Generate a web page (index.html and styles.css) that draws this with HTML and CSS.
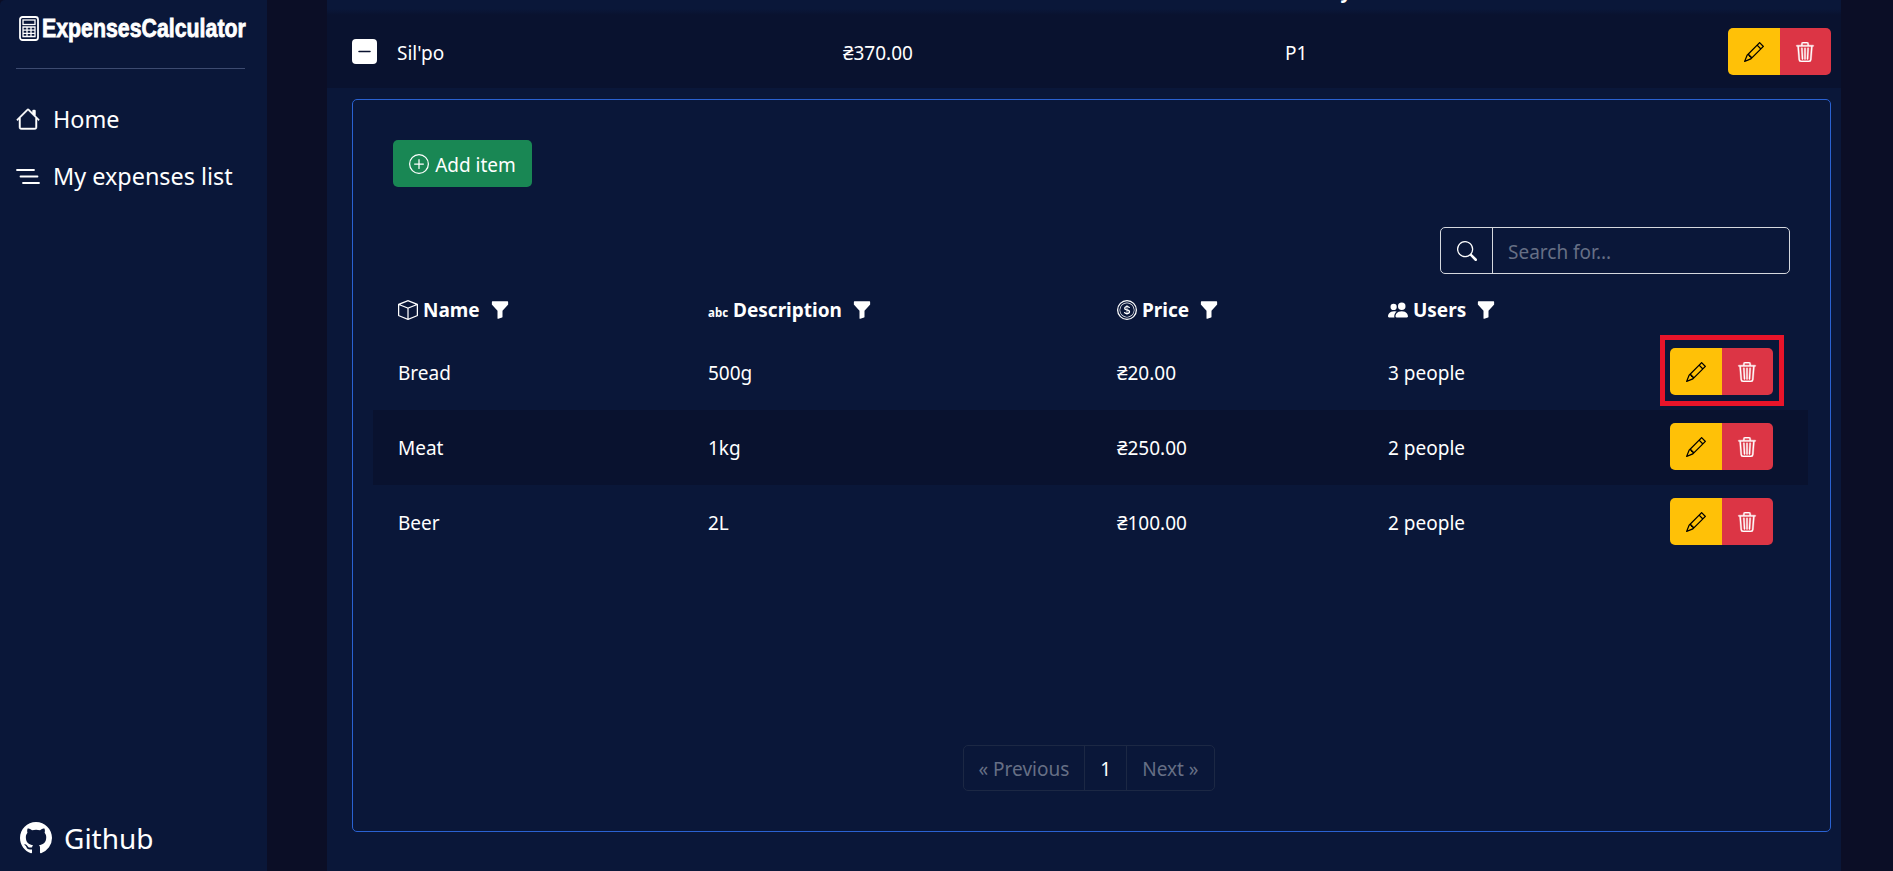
FILE: index.html
```html
<!DOCTYPE html>
<html lang="en">
<head>
    <meta charset="UTF-8">
    <meta name="viewport" content="width=device-width, initial-scale=1.0">
    <title>ExpensesCalculator</title>
    <link rel="stylesheet" href="styles.css">
</head>
<body>
    <aside class="sidebar">
        <div class="brand">
            <svg class="brand-icon" viewBox="0 0 20 25" fill="none" stroke="currentColor">
                <rect x="1" y="1" width="18" height="23" rx="2.5" stroke-width="1.8"/>
                <rect x="4" y="4" width="12" height="4.5" stroke-width="1.3"/>
                <path d="M4 11h12v9.500H4zM4 14.200h12M4 17.300h12M8 11v9.500M12 11v9.500" stroke-width="1.300"/>
            </svg>
            <span class="brand-name">ExpensesCalculator</span>
        </div>
        <nav class="nav">
            <a class="nav-link" href="#">
                <svg class="nav-icon" viewBox="0 0 16 16" fill="currentColor" stroke="currentColor" stroke-width="0.3"><path d="M8.707 1.5a1 1 0 0 0-1.414 0L.646 8.146a.5.5 0 0 0 .708.708L2 8.207V13.500A1.500 1.500 0 0 0 3.500 15h9a1.500 1.500 0 0 0 1.500-1.500V8.207l.646.647a.5.5 0 0 0 .708-.708L13 5.793V2.500a.5.5 0 0 0-.5-.5h-1a.5.5 0 0 0-.5.5v1.293zM13 7.207V13.500a.5.5 0 0 1-.5.5h-9a.5.5 0 0 1-.5-.5V7.207l5-5z"/></svg>
                Home
            </a>
            <a class="nav-link" href="#">
                <svg class="nav-icon" viewBox="0 0 24 24" fill="none" stroke="currentColor" stroke-width="1.800" stroke-linecap="round"><path d="M1 6h17M4.500 12.500h17M7 19h16"/></svg>
                My expenses list
            </a>
        </nav>
        <a class="github" href="#">
            <svg class="github-icon" viewBox="0 0 16 16" fill="currentColor"><path d="M8 0C3.580 0 0 3.580 0 8c0 3.540 2.290 6.530 5.470 7.590.4.070.55-.17.55-.38 0-.19-.01-.82-.01-1.490-2.010.37-2.530-.49-2.690-.94-.09-.23-.48-.94-.82-1.130-.28-.15-.68-.52-.01-.53.63-.01 1.080.58 1.230.82.72 1.210 1.870.87 2.330.66.070-.52.28-.87.51-1.070-1.780-.2-3.640-.89-3.640-3.950 0-.87.31-1.590.82-2.150-.08-.2-.36-1.020.08-2.120 0 0 .67-.21 2.200.82.64-.18 1.320-.27 2-.27s1.360.09 2 .27c1.530-1.040 2.200-.82 2.200-.82.44 1.100.16 1.920.08 2.120.51.56.82 1.270.82 2.150 0 3.070-1.870 3.750-3.650 3.950.29.25.54.73.54 1.480 0 1.070-.01 1.930-.01 2.200 0 .21.15.46.55.38A8.010 8.010 0 0 0 16 8c0-4.420-3.580-8-8-8"/></svg>
            Github
        </a>
    </aside>

    <main class="main">
        <div class="list-head"><span class="list-head-text">Paid by</span></div>

        <div class="expense-row">
            <button class="toggle">
                <svg viewBox="0 0 16 16" fill="currentColor"><path d="M4 8a.5.5 0 0 1 .5-.5h7a.5.5 0 0 1 0 1h-7A.5.5 0 0 1 4 8"/></svg>
            </button>
            <span class="cell">Sil'po</span>
            <span class="cell">₴370.00</span>
            <span class="cell">P1</span>
            <div class="btn-group">
                <button class="btn-edit">
                    <svg class="icon" viewBox="0 0 16 16" fill="currentColor"><path d="M12.146.146a.5.5 0 0 1 .708 0l3 3a.5.5 0 0 1 0 .708l-10 10a.5.5 0 0 1-.168.11l-5 2a.5.5 0 0 1-.65-.65l2-5a.5.5 0 0 1 .11-.168zM11.207 2.500 13.500 4.793 14.793 3.500 12.500 1.207zm1.586 3L10.500 3.207 4 9.707V10h.5a.5.5 0 0 1 .5.5v.5h.5a.5.5 0 0 1 .5.5v.5h.293zm-9.761 5.175-.106.106-1.528 3.821 3.821-1.528.106-.106A.5.5 0 0 1 5 12.500V12h-.5a.5.5 0 0 1-.5-.5V11h-.5a.5.5 0 0 1-.468-.325"/></svg>
                </button>
                <button class="btn-delete">
                    <svg class="icon" viewBox="0 0 16 16" fill="currentColor"><path d="M6.500 1h3a.5.5 0 0 1 .5.5v1H6v-1a.5.5 0 0 1 .5-.5M11 2.500v-1A1.500 1.500 0 0 0 9.500 0h-3A1.500 1.500 0 0 0 5 1.500v1H1.500a.5.5 0 0 0 0 1h.538l.853 10.660A2 2 0 0 0 4.885 16h6.230a2 2 0 0 0 1.994-1.840l.853-10.660h.538a.5.5 0 0 0 0-1zm1.958 1-.846 10.580a1 1 0 0 1-.997.92h-6.230a1 1 0 0 1-.997-.92L3.042 3.500zm-7.487 1a.5.5 0 0 1 .528.47l.5 8.500a.5.5 0 0 1-.998.06L5 5.030a.5.5 0 0 1 .47-.53Zm5.058 0a.5.5 0 0 1 .47.53l-.5 8.500a.5.5 0 1 1-.998-.06l.5-8.500a.5.5 0 0 1 .528-.47M8 4.500a.5.5 0 0 1 .5.5v8.500a.5.5 0 0 1-1 0V5a.5.5 0 0 1 .5-.5"/></svg>
                </button>
            </div>
        </div>

        <section class="items-box">
            <button class="btn-add">
                <svg class="icon" viewBox="0 0 16 16" fill="currentColor"><path d="M8 15A7 7 0 1 1 8 1a7 7 0 0 1 0 14m0 1A8 8 0 1 0 8 0a8 8 0 0 0 0 16"/><path d="M8 4a.5.5 0 0 1 .5.5v3h3a.5.5 0 0 1 0 1h-3v3a.5.5 0 0 1-1 0v-3h-3a.5.5 0 0 1 0-1h3v-3A.5.5 0 0 1 8 4"/></svg>
                <span class="cell">Add item</span>
            </button>

            <div class="search">
                <span class="search-icon">
                    <svg class="icon" viewBox="0 0 16 16" fill="currentColor"><path d="M11.742 10.344a6.500 6.500 0 1 0-1.397 1.398h-.001q.044.06.098.115l3.850 3.850a1 1 0 0 0 1.415-1.414l-3.850-3.850a1 1 0 0 0-.115-.1zM12 6.500a5.500 5.500 0 1 1-11 0 5.500 5.500 0 0 1 11 0"/></svg>
                </span>
                <input type="text" placeholder="Search for...">
            </div>

            <table class="items">
                <thead>
                    <tr>
                        <th class="col-name">
                            <svg class="icon" viewBox="0 0 16 16" fill="currentColor"><path d="M8.186 1.113a.5.5 0 0 0-.372 0L1.846 3.500 8 5.961 14.154 3.500zM15 4.239l-6.500 2.600v7.922l6.500-2.600V4.240zM7.500 14.762V6.838L1 4.239v7.925zM7.443.184a1.500 1.500 0 0 1 1.114 0l7.129 2.852A.5.5 0 0 1 16 3.500v8.662a1 1 0 0 1-.629.928l-7.185 2.874a.5.5 0 0 1-.372 0L.63 13.090a1 1 0 0 1-.63-.928V3.500a.5.5 0 0 1 .314-.464z"/></svg>
                            Name
                            <svg class="icon funnel" viewBox="0 0 16 16" fill="currentColor"><path d="M1.500 1.500A.5.5 0 0 1 2 1h12a.5.5 0 0 1 .5.5v2a.5.5 0 0 1-.128.334L10 8.692V13.500a.5.5 0 0 1-.342.474l-3 1A.5.5 0 0 1 6 14.500V8.692L1.628 3.834A.5.5 0 0 1 1.500 3.500z"/></svg>
                        </th>
                        <th class="col-desc">
                            <span class="abc">abc</span>
                            Description
                            <svg class="icon funnel" viewBox="0 0 16 16" fill="currentColor"><path d="M1.500 1.500A.5.5 0 0 1 2 1h12a.5.5 0 0 1 .5.5v2a.5.5 0 0 1-.128.334L10 8.692V13.500a.5.5 0 0 1-.342.474l-3 1A.5.5 0 0 1 6 14.500V8.692L1.628 3.834A.5.5 0 0 1 1.500 3.500z"/></svg>
                        </th>
                        <th class="col-price">
                            <svg class="icon" viewBox="0 0 16 16" fill="currentColor"><path d="M5.500 9.511c.076.954.83 1.697 2.182 1.785V12h.6v-.709c1.400-.098 2.218-.846 2.218-1.932 0-.987-.626-1.496-1.745-1.760l-.473-.112V5.570c.6.068.982.396 1.074.85h1.052c-.076-.919-.864-1.638-2.126-1.716V4h-.6v.719c-1.195.117-2.010.836-2.010 1.853 0 .9.606 1.472 1.613 1.707l.397.098v2.034c-.615-.093-1.022-.43-1.114-.9zm2.177-2.166c-.59-.137-.91-.416-.91-.836 0-.47.345-.822.915-.925v1.760h-.005zm.692 1.193c.717.166 1.048.435 1.048.91 0 .542-.412.914-1.135 1.017V8.540z"/><path d="M8 15A7 7 0 1 1 8 1a7 7 0 0 1 0 14m0 1A8 8 0 1 0 8 0a8 8 0 0 0 0 16"/><path d="M8 13.500a5.500 5.500 0 1 1 0-11 5.500 5.500 0 0 1 0 11m0 .5A6 6 0 1 0 8 2a6 6 0 0 0 0 12"/></svg>
                            Price
                            <svg class="icon funnel" viewBox="0 0 16 16" fill="currentColor"><path d="M1.500 1.500A.5.5 0 0 1 2 1h12a.5.5 0 0 1 .5.5v2a.5.5 0 0 1-.128.334L10 8.692V13.500a.5.5 0 0 1-.342.474l-3 1A.5.5 0 0 1 6 14.500V8.692L1.628 3.834A.5.5 0 0 1 1.500 3.500z"/></svg>
                        </th>
                        <th class="col-users">
                            <svg class="icon" viewBox="0 0 16 16" fill="currentColor"><path d="M7 14s-1 0-1-1 1-4 5-4 5 3 5 4-1 1-1 1zm4-6a3 3 0 1 0 0-6 3 3 0 0 0 0 6m-5.784 6A2.240 2.240 0 0 1 5 13c0-1.355.68-2.750 1.936-3.720A6.300 6.300 0 0 0 5 9c-4 0-5 3-5 4s1 1 1 1zM4.500 8a2.500 2.500 0 1 0 0-5 2.500 2.500 0 0 0 0 5"/></svg>
                            Users
                            <svg class="icon funnel" viewBox="0 0 16 16" fill="currentColor"><path d="M1.500 1.500A.5.5 0 0 1 2 1h12a.5.5 0 0 1 .5.5v2a.5.5 0 0 1-.128.334L10 8.692V13.500a.5.5 0 0 1-.342.474l-3 1A.5.5 0 0 1 6 14.500V8.692L1.628 3.834A.5.5 0 0 1 1.500 3.500z"/></svg>
                        </th>
                        <th></th>
                    </tr>
                </thead>
                <tbody>
                    <tr>
                        <td>Bread</td>
                        <td>500g</td>
                        <td>₴20.00</td>
                        <td>3 people</td>
                        <td class="actions">
                            <div class="btn-group marked">
                                <button class="btn-edit"><svg class="icon" viewBox="0 0 16 16" fill="currentColor"><path d="M12.146.146a.5.5 0 0 1 .708 0l3 3a.5.5 0 0 1 0 .708l-10 10a.5.5 0 0 1-.168.11l-5 2a.5.5 0 0 1-.65-.65l2-5a.5.5 0 0 1 .11-.168zM11.207 2.500 13.500 4.793 14.793 3.500 12.500 1.207zm1.586 3L10.500 3.207 4 9.707V10h.5a.5.5 0 0 1 .5.5v.5h.5a.5.5 0 0 1 .5.5v.5h.293zm-9.761 5.175-.106.106-1.528 3.821 3.821-1.528.106-.106A.5.5 0 0 1 5 12.500V12h-.5a.5.5 0 0 1-.5-.5V11h-.5a.5.5 0 0 1-.468-.325"/></svg></button>
                                <button class="btn-delete"><svg class="icon" viewBox="0 0 16 16" fill="currentColor"><path d="M6.500 1h3a.5.5 0 0 1 .5.5v1H6v-1a.5.5 0 0 1 .5-.5M11 2.500v-1A1.500 1.500 0 0 0 9.500 0h-3A1.500 1.500 0 0 0 5 1.500v1H1.500a.5.5 0 0 0 0 1h.538l.853 10.660A2 2 0 0 0 4.885 16h6.230a2 2 0 0 0 1.994-1.840l.853-10.660h.538a.5.5 0 0 0 0-1zm1.958 1-.846 10.580a1 1 0 0 1-.997.92h-6.230a1 1 0 0 1-.997-.92L3.042 3.500zm-7.487 1a.5.5 0 0 1 .528.47l.5 8.500a.5.5 0 0 1-.998.06L5 5.030a.5.5 0 0 1 .47-.53Zm5.058 0a.5.5 0 0 1 .47.53l-.5 8.500a.5.5 0 1 1-.998-.06l.5-8.500a.5.5 0 0 1 .528-.47M8 4.500a.5.5 0 0 1 .5.5v8.500a.5.5 0 0 1-1 0V5a.5.5 0 0 1 .5-.5"/></svg></button>
                            </div>
                        </td>
                    </tr>
                    <tr class="striped">
                        <td>Meat</td>
                        <td>1kg</td>
                        <td>₴250.00</td>
                        <td>2 people</td>
                        <td class="actions">
                            <div class="btn-group">
                                <button class="btn-edit"><svg class="icon" viewBox="0 0 16 16" fill="currentColor"><path d="M12.146.146a.5.5 0 0 1 .708 0l3 3a.5.5 0 0 1 0 .708l-10 10a.5.5 0 0 1-.168.11l-5 2a.5.5 0 0 1-.65-.65l2-5a.5.5 0 0 1 .11-.168zM11.207 2.500 13.500 4.793 14.793 3.500 12.500 1.207zm1.586 3L10.500 3.207 4 9.707V10h.5a.5.5 0 0 1 .5.5v.5h.5a.5.5 0 0 1 .5.5v.5h.293zm-9.761 5.175-.106.106-1.528 3.821 3.821-1.528.106-.106A.5.5 0 0 1 5 12.500V12h-.5a.5.5 0 0 1-.5-.5V11h-.5a.5.5 0 0 1-.468-.325"/></svg></button>
                                <button class="btn-delete"><svg class="icon" viewBox="0 0 16 16" fill="currentColor"><path d="M6.500 1h3a.5.5 0 0 1 .5.5v1H6v-1a.5.5 0 0 1 .5-.5M11 2.500v-1A1.500 1.500 0 0 0 9.500 0h-3A1.500 1.500 0 0 0 5 1.500v1H1.500a.5.5 0 0 0 0 1h.538l.853 10.660A2 2 0 0 0 4.885 16h6.230a2 2 0 0 0 1.994-1.840l.853-10.660h.538a.5.5 0 0 0 0-1zm1.958 1-.846 10.580a1 1 0 0 1-.997.92h-6.230a1 1 0 0 1-.997-.92L3.042 3.500zm-7.487 1a.5.5 0 0 1 .528.47l.5 8.500a.5.5 0 0 1-.998.06L5 5.030a.5.5 0 0 1 .47-.53Zm5.058 0a.5.5 0 0 1 .47.53l-.5 8.500a.5.5 0 1 1-.998-.06l.5-8.500a.5.5 0 0 1 .528-.47M8 4.500a.5.5 0 0 1 .5.5v8.500a.5.5 0 0 1-1 0V5a.5.5 0 0 1 .5-.5"/></svg></button>
                            </div>
                        </td>
                    </tr>
                    <tr>
                        <td>Beer</td>
                        <td>2L</td>
                        <td>₴100.00</td>
                        <td>2 people</td>
                        <td class="actions">
                            <div class="btn-group">
                                <button class="btn-edit"><svg class="icon" viewBox="0 0 16 16" fill="currentColor"><path d="M12.146.146a.5.5 0 0 1 .708 0l3 3a.5.5 0 0 1 0 .708l-10 10a.5.5 0 0 1-.168.11l-5 2a.5.5 0 0 1-.65-.65l2-5a.5.5 0 0 1 .11-.168zM11.207 2.500 13.500 4.793 14.793 3.500 12.500 1.207zm1.586 3L10.500 3.207 4 9.707V10h.5a.5.5 0 0 1 .5.5v.5h.5a.5.5 0 0 1 .5.5v.5h.293zm-9.761 5.175-.106.106-1.528 3.821 3.821-1.528.106-.106A.5.5 0 0 1 5 12.500V12h-.5a.5.5 0 0 1-.5-.5V11h-.5a.5.5 0 0 1-.468-.325"/></svg></button>
                                <button class="btn-delete"><svg class="icon" viewBox="0 0 16 16" fill="currentColor"><path d="M6.500 1h3a.5.5 0 0 1 .5.5v1H6v-1a.5.5 0 0 1 .5-.5M11 2.500v-1A1.500 1.500 0 0 0 9.500 0h-3A1.500 1.500 0 0 0 5 1.500v1H1.500a.5.5 0 0 0 0 1h.538l.853 10.660A2 2 0 0 0 4.885 16h6.230a2 2 0 0 0 1.994-1.840l.853-10.660h.538a.5.5 0 0 0 0-1zm1.958 1-.846 10.580a1 1 0 0 1-.997.92h-6.230a1 1 0 0 1-.997-.92L3.042 3.500zm-7.487 1a.5.5 0 0 1 .528.47l.5 8.500a.5.5 0 0 1-.998.06L5 5.030a.5.5 0 0 1 .47-.53Zm5.058 0a.5.5 0 0 1 .47.53l-.5 8.500a.5.5 0 1 1-.998-.06l.5-8.500a.5.5 0 0 1 .528-.47M8 4.500a.5.5 0 0 1 .5.5v8.500a.5.5 0 0 1-1 0V5a.5.5 0 0 1 .5-.5"/></svg></button>
                            </div>
                        </td>
                    </tr>
                </tbody>
            </table>

            <div class="pagination">
                <a class="page-link disabled" href="#">« Previous</a>
                <a class="page-link current" href="#">1</a>
                <a class="page-link disabled" href="#">Next »</a>
            </div>
        </section>
    </main>
</body>
</html>
```

FILE: styles.css
```css
:root {
    --panel: #0a1739;
    --outer: #0b0e26;
    --row-dark: #09122f;
    --blue: #2a62d2;
    --muted: #666f85;
    --text: #ffffff;
}

* {
    box-sizing: border-box;
    margin: 0;
    padding: 0;
}

body {
    font-family: 'Noto Sans', 'Open Sans', sans-serif;
    font-size: 19px;
    background: var(--outer);
    color: var(--text);
    height: 100vh;
    overflow: hidden;
    display: flex;
}

a {
    color: inherit;
    text-decoration: none;
}

button {
    border: none;
    color: inherit;
    font: inherit;
}

.icon {
    width: 20px;
    height: 20px;
    flex-shrink: 0;
}

.cell {
    padding-top: 2px;
}

/* sidebar */
.sidebar {
    width: 267px;
    flex-shrink: 0;
    background: var(--panel);
    border-radius: 5px 0 0 0;
    padding: 16px 22px 14px 16px;
    display: flex;
    flex-direction: column;
}

.brand {
    display: flex;
    align-items: center;
    gap: 3px;
    height: 25px;
    padding-left: 3px;
}

.brand-icon {
    width: 20px;
    height: 25px;
    flex-shrink: 0;
}

/* no condensed heavy face installed, so squeeze a bold one */
.brand-name {
    font-family: 'Liberation Sans', sans-serif;
    font-size: 26px;
    font-weight: 700;
    -webkit-text-stroke: 0.8px #fff;
    white-space: nowrap;
    transform: scaleX(0.82);
    transform-origin: left center;
}

.nav {
    margin-top: 27px;
    padding-top: 27px;
    border-top: 1px solid #3d4b70;
    display: flex;
    flex-direction: column;
    gap: 11px;
}

.nav-link {
    display: flex;
    align-items: center;
    gap: 13px;
    height: 46px;
    font-size: 23.4px;
}

.nav-icon {
    width: 24px;
    height: 24px;
    flex-shrink: 0;
}

.github {
    margin-top: auto;
    margin-left: 4px;
    display: flex;
    align-items: center;
    gap: 12px;
    font-size: 28px;
}

.github-icon {
    width: 32px;
    height: 32px;
}

/* main panel */
.main {
    width: 1514px;
    margin-left: 60px;
    background: var(--panel);
    overflow: hidden;
}

.list-head {
    height: 15px;
    overflow: hidden;
    background: linear-gradient(var(--panel) 60%, var(--row-dark));
    padding-left: 956px;
}

.list-head-text {
    display: block;
    font-weight: 700;
    line-height: 20px;
    margin-top: -19px;
}

.expense-row {
    height: 73px;
    background: var(--row-dark);
    display: grid;
    grid-template-columns: 45px 446px 442px 1fr auto;
    align-items: center;
    padding: 0 10px 0 25px;
}

.toggle {
    width: 25px;
    height: 25px;
    background: #fff;
    color: #09122f;
    border-radius: 4px;
    display: flex;
    align-items: center;
    justify-content: center;
}

.toggle svg {
    width: 25px;
    height: 25px;
    flex-shrink: 0;
}

.btn-group {
    display: inline-flex;
    position: relative;
    vertical-align: middle;
}

.btn-group button {
    width: 51.5px;
    height: 47px;
    display: flex;
    align-items: center;
    justify-content: center;
}

.btn-edit {
    background: #ffc107;
    color: #000;
    border-radius: 5px 0 0 5px;
}

.btn-delete {
    background: #dc3545;
    color: #fff;
    border-radius: 0 5px 5px 0;
}

.btn-delete svg {
    stroke: currentColor;
    stroke-width: 0.3;
}

/* red frame drawn over the first row's buttons */
.btn-group.marked::after {
    content: '';
    position: absolute;
    top: -13px;
    right: -11px;
    bottom: -11px;
    left: -10px;
    border: 5px solid #e8142a;
    pointer-events: none;
}

/* expanded box */
.items-box {
    margin: 11px 10px 0 25px;
    height: 733px;
    padding: 40px 40px 40px 40px;
    border: 1px solid var(--blue);
    border-radius: 5px;
    display: flex;
    flex-direction: column;
}

.btn-add {
    align-self: flex-start;
    width: 139px;
    height: 47px;
    background: #198754;
    border-radius: 5px;
    display: flex;
    align-items: center;
    justify-content: center;
    gap: 6px;
}

.search {
    align-self: flex-end;
    margin-top: 40px;
    width: 350px;
    height: 47px;
    border: 1px solid #d5d8de;
    border-radius: 5px;
    display: flex;
}

.search-icon {
    width: 52px;
    border-right: 1px solid #d5d8de;
    display: flex;
    align-items: center;
    justify-content: center;
}

.search input {
    flex: 1;
    min-width: 0;
    padding: 2px 15px 0;
    border: none;
    outline: none;
    background: transparent;
    color: var(--text);
    font: inherit;
}

.search input::placeholder {
    color: var(--muted);
    opacity: 1;
}

.items {
    width: 1435px;
    margin: 10px -18px 0 -20px;
    border-collapse: collapse;
    table-layout: fixed;
}

.items th {
    height: 51px;
    padding: 0 0 0 25px;
    text-align: left;
    font-weight: 700;
    white-space: nowrap;
}

.items th svg {
    vertical-align: -3px;
}

.funnel {
    margin-left: 5px;
}

.abc {
    font-size: 11.5px;
    font-weight: 700;
}

.col-name { width: 310px; }
.col-desc { width: 409px; }
.col-price { width: 271px; }
.col-users { width: 307px; }

.items td {
    height: 75px;
    padding: 0 0 0 25px;
}

.items .actions {
    padding: 0 0 2px;
    white-space: nowrap;
}

.striped {
    background: var(--row-dark);
}

.pagination {
    margin-top: auto;
    margin-right: 6px;
    align-self: center;
    height: 46px;
    display: flex;
    border: 1px solid #1c2844;
    border-radius: 5px;
}

.page-link {
    padding: 2px 15px 0;
    display: flex;
    align-items: center;
}

.page-link + .page-link {
    border-left: 1px solid #1c2844;
}

.page-link.disabled {
    color: var(--muted);
}
```
